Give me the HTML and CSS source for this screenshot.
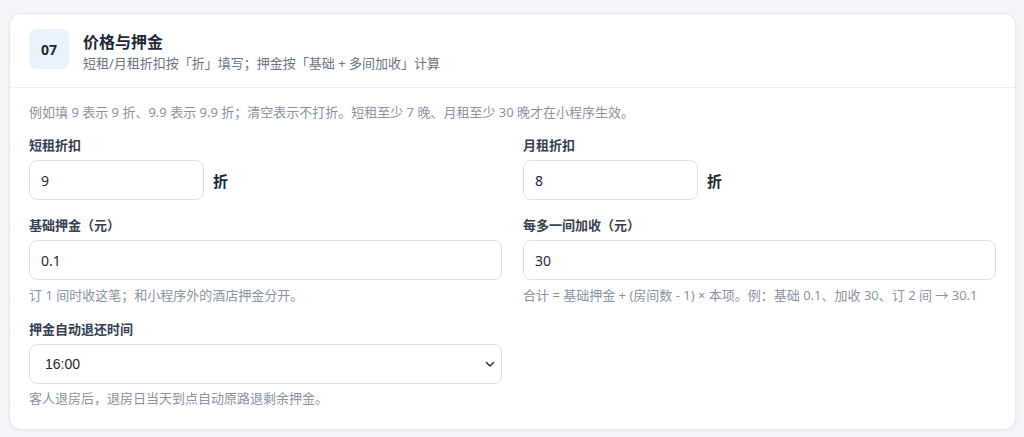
FILE: index.html
```html
<!DOCTYPE html>
<html lang="zh-CN">
<head>
<meta charset="utf-8">
<title>价格与押金</title>
<link rel="stylesheet" href="styles.css">
</head>
<body>
<div class="page">
  <section class="card">
    <header class="card-head">
      <div class="badge">07</div>
      <div class="head-text">
        <h2 class="title">价格与押金</h2>
        <p class="subtitle">短租/月租折扣按「折」填写；押金按「基础 + 多间加收」计算</p>
      </div>
    </header>
    <div class="card-body">
      <p class="hint">例如填 9 表示 9 折、9.9 表示 9.9 折；清空表示不打折。短租至少 7 晚、月租至少 30 晚才在小程序生效。</p>
      <div class="grid">
        <div class="field">
          <label class="label">短租折扣</label>
          <div class="inline">
            <input class="input short" type="text" value="9">
            <span class="unit">折</span>
          </div>
        </div>
        <div class="field">
          <label class="label">月租折扣</label>
          <div class="inline">
            <input class="input short" type="text" value="8">
            <span class="unit">折</span>
          </div>
        </div>
        <div class="field">
          <label class="label">基础押金（元）</label>
          <input class="input" type="text" value="0.1">
          <p class="help">订 1 间时收这笔；和小程序外的酒店押金分开。</p>
        </div>
        <div class="field">
          <label class="label">每多一间加收（元）</label>
          <input class="input" type="text" value="30">
          <p class="help">合计 = 基础押金 + (房间数 - 1) × 本项。例：基础 0.1、加收 30、订 2 间 → 30.1</p>
        </div>
        <div class="field">
          <label class="label">押金自动退还时间</label>
          <div class="select-wrap">
            <select class="select">
              <option>16:00</option>
            </select>
            <svg class="chev" width="12" height="12" viewBox="0 0 12 12"><path d="M2.5 4.5 L6 8 L9.5 4.5" fill="none" stroke="#333" stroke-width="1.5" stroke-linecap="round" stroke-linejoin="round"/></svg>
          </div>
          <p class="help help-tight">客人退房后，退房日当天到点自动原路退剩余押金。</p>
        </div>
      </div>
    </div>
  </section>
</div>
</body>
</html>
```

FILE: styles.css
```css
* { box-sizing: border-box; }
html, body { margin: 0; padding: 0; }
body {
  background: #f3f5f8;
  font-family: "Noto Sans", "Noto Sans CJK SC", sans-serif;
  color: #1f2937;
}
.page {
  padding: 13px 8px 8px 9px;
}
.card {
  background: #fff;
  border: 1px solid #e6e9ee;
  border-radius: 12px;
  box-shadow: 0 1px 3px rgba(15, 23, 42, 0.05);
}
.card-head {
  display: flex;
  align-items: flex-start;
  gap: 14px;
  padding: 15px 19px 15px;
  border-bottom: 1px solid #eef0f3;
}
.head-text {
  margin-top: 3px;
}
.badge {
  flex: none;
  width: 40px;
  height: 40px;
  border-radius: 8px;
  background: #e9f3fc;
  color: #1e293b;
  font-weight: 700;
  font-size: 14px;
  display: flex;
  align-items: center;
  justify-content: center;
}
.title {
  margin: 0;
  font-size: 16px;
  line-height: 21px;
  font-weight: 700;
  color: #1f2937;
}
.subtitle {
  margin: 1px 0 0;
  font-size: 13px;
  line-height: 18px;
  color: #6b7585;
}
.card-body {
  padding: 15px 19px 22px;
}
.hint {
  margin: 0 0 14px;
  font-size: 13px;
  line-height: 19px;
  color: #8a94a3;
}
.grid {
  display: grid;
  grid-template-columns: 1fr 1fr;
  column-gap: 21px;
  row-gap: 16px;
}
.field {
  display: flex;
  flex-direction: column;
  min-width: 0;
}
.label {
  font-size: 13px;
  line-height: 18px;
  font-weight: 700;
  color: #374151;
  margin-bottom: 6px;
}
.inline {
  display: flex;
  align-items: center;
  gap: 9px;
}
.input {
  height: 40px;
  width: 100%;
  border: 1px solid #dde1e7;
  border-radius: 8px;
  padding: 0 11px;
  font-family: "Noto Sans", "Noto Sans CJK SC", sans-serif;
  font-size: 14px;
  color: #1f2937;
  background: #fff;
  outline: none;
}
.input.short {
  width: 175px;
}
.unit {
  font-size: 15px;
  font-weight: 700;
  color: #1f2937;
}
.help {
  margin: 6px 0 0;
  font-size: 13px;
  line-height: 18px;
  color: #8a94a3;
}
.help-tight {
  margin-top: 5px;
}
.select-wrap {
  position: relative;
}
.select {
  -webkit-appearance: none;
  appearance: none;
  height: 40px;
  width: 100%;
  border: 1px solid #dde1e7;
  border-radius: 8px;
  padding: 0 15px;
  font-family: "Liberation Sans", Arial, sans-serif;
  font-size: 14px;
  color: #1f2937;
  background: #fff;
  outline: none;
}
.chev {
  position: absolute;
  right: 6px;
  top: 14px;
  pointer-events: none;
}
```
